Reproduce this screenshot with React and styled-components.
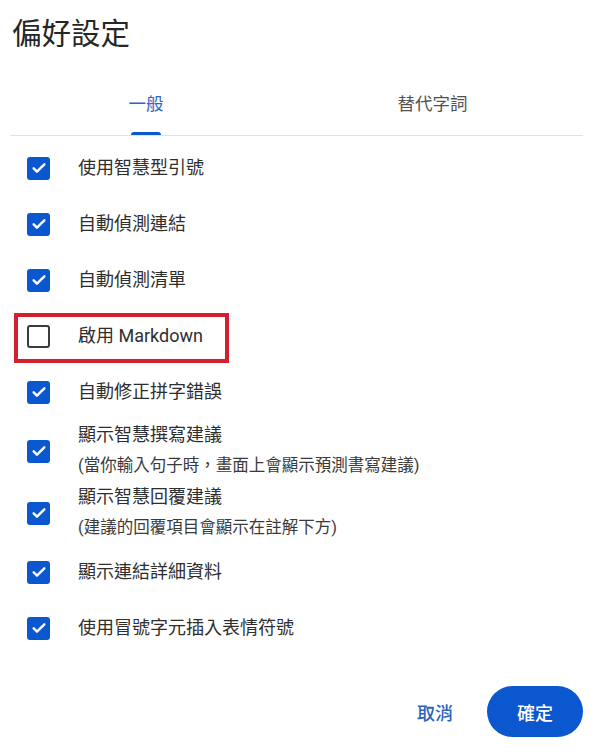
import React from 'react';
import styled, { createGlobalStyle } from 'styled-components';

const GlobalStyle = createGlobalStyle`
  body {
    margin: 0;
    background: #ffffff;
    font-family: "Roboto", "Noto Sans CJK TC", sans-serif;
    color: #1f1f1f;
  }
`;

const Dialog = styled.div`
  width: 600px;
  height: 756px;
  box-sizing: border-box;
  overflow: hidden;
  background: #ffffff;
`;

const Title = styled.h1`
  margin: 14px 0 0 12px;
  font-size: 29.5px;
  line-height: 40px;
  font-weight: 400;
  color: #262626;
`;

const TabBar = styled.div`
  display: grid;
  grid-template-columns: 272px 301px;
  margin: 0 17px 0 10px;
  border-bottom: 1px solid #e1e3e1;
`;

const Tab = styled.div`
  display: flex;
  flex-direction: column;
  align-items: center;
  padding-top: 38px;
  height: 81px;
  box-sizing: border-box;
  font-size: 17.5px;
  line-height: 24px;
  color: ${({ active }) => (active ? '#2f66c4' : '#505254')};
`;

const Indicator = styled.span`
  width: 30px;
  height: 3px;
  margin-top: 16px;
  border-radius: 3px 3px 0 0;
  background: ${({ active }) => (active ? '#0b57d0' : 'transparent')};
`;

const List = styled.div`
  padding-top: 4px;
`;

const Row = styled.div`
  position: relative;
  display: flex;
  align-items: center;
  gap: 28px;
  padding-left: 27px;
  min-height: ${({ tall }) => (tall ? '62px' : '56px')};

  ${({ highlighted }) =>
    highlighted &&
    `
    &::after {
      content: '';
      position: absolute;
      left: 14px;
      top: 5px;
      width: 215px;
      height: 50px;
      box-sizing: border-box;
      border: 4px solid #d2202f;
    }
  `}
`;

const Box = styled.span`
  flex: none;
  width: 23px;
  height: 23px;
  box-sizing: border-box;
  border-radius: 3px;
  display: flex;
  align-items: center;
  justify-content: center;
  background: ${({ checked }) => (checked ? '#0b57d0' : '#ffffff')};
  border: ${({ checked }) => (checked ? 'none' : '2px solid #3c3c3c')};
`;

const Texts = styled.div`
  display: flex;
  flex-direction: column;
`;

const Label = styled.span`
  font-size: 18px;
  line-height: ${({ tall }) => (tall ? '30px' : '24px')};
  color: #2e2e2e;
`;

const Hint = styled.span`
  font-size: 16.5px;
  line-height: 32px;
  color: #3a3a3a;
`;

const Footer = styled.div`
  display: flex;
  justify-content: flex-end;
  align-items: center;
  gap: 22px;
  margin-top: 30px;
  padding-right: 17px;
`;

const TextButton = styled.button`
  border: none;
  background: none;
  padding: 0 12px;
  font-family: inherit;
  font-size: 18px;
  font-weight: 500;
  color: #2f63b8;
`;

const FilledButton = styled.button`
  width: 96px;
  height: 51px;
  border: none;
  border-radius: 26px;
  background: #0b57d0;
  color: #ffffff;
  font-family: inherit;
  font-size: 18px;
  font-weight: 500;
`;

const Check = () => (
  <svg width="16" height="16" viewBox="0 0 24 24">
    <path d="M4 12.5l5 5L20 6.5" fill="none" stroke="#fff" strokeWidth="3.6" strokeLinecap="round" strokeLinejoin="round" />
  </svg>
);

const Checkbox = ({ checked }) => <Box checked={checked}>{checked && <Check />}</Box>;

const options = [
  { label: '使用智慧型引號', checked: true },
  { label: '自動偵測連結', checked: true },
  { label: '自動偵測清單', checked: true },
  { label: '啟用 Markdown', checked: false, highlighted: true },
  { label: '自動修正拼字錯誤', checked: true },
  { label: '顯示智慧撰寫建議', hint: '(當你輸入句子時，畫面上會顯示預測書寫建議)', checked: true },
  { label: '顯示智慧回覆建議', hint: '(建議的回覆項目會顯示在註解下方)', checked: true },
  { label: '顯示連結詳細資料', checked: true },
  { label: '使用冒號字元插入表情符號', checked: true },
];

const App = () => (
  <Dialog>
    <GlobalStyle />
    <Title>偏好設定</Title>
    <TabBar>
      <Tab active>
        一般
        <Indicator active />
      </Tab>
      <Tab>
        替代字詞
        <Indicator />
      </Tab>
    </TabBar>
    <List>
      {options.map((o) => (
        <Row key={o.label} tall={!!o.hint} highlighted={o.highlighted}>
          <Checkbox checked={o.checked} />
          <Texts>
            <Label tall={!!o.hint}>{o.label}</Label>
            {o.hint && <Hint>{o.hint}</Hint>}
          </Texts>
        </Row>
      ))}
    </List>
    <Footer>
      <TextButton>取消</TextButton>
      <FilledButton>確定</FilledButton>
    </Footer>
  </Dialog>
);

export default App;
